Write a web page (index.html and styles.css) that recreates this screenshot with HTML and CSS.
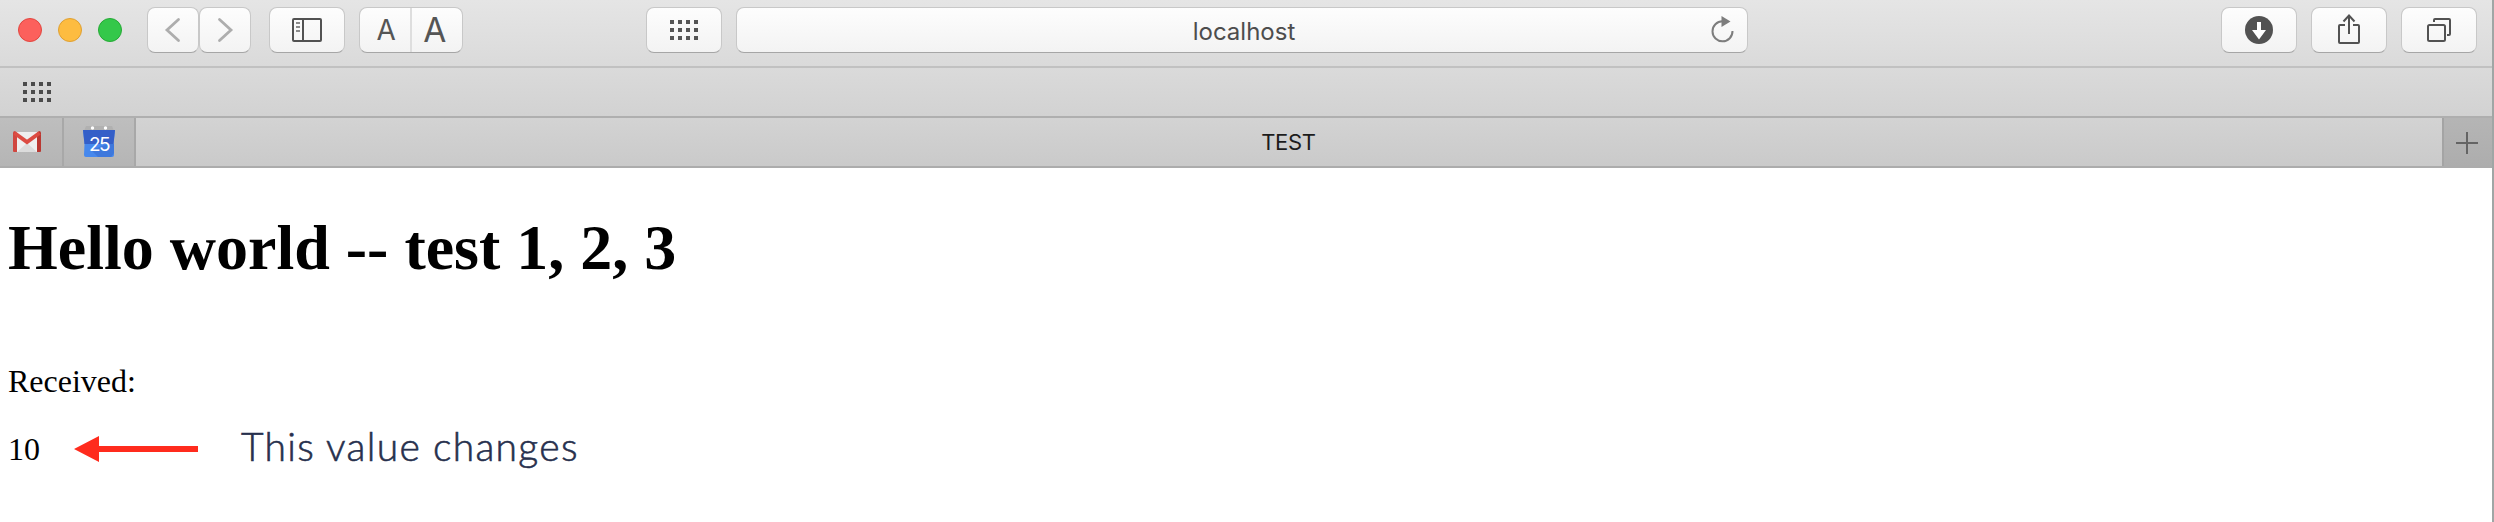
FILE: index.html
```html
<!DOCTYPE html>
<html lang="en">
<head>
<meta charset="utf-8">
<title>TEST</title>
<link rel="stylesheet" href="styles.css">
</head>
<body>
<div class="window">
  <header class="chrome">
    <div class="toolbar">
      <div class="lights"><i class="light red"></i><i class="light yellow"></i><i class="light green"></i></div>
      <div class="history">
        <button class="btn nav"><svg width="50" height="44"><path d="M30.500 11.500L19 22L30.500 32.500" fill="none" stroke="#adadad" stroke-width="2.800" stroke-linecap="round"/></svg></button>
        <button class="btn nav"><svg width="50" height="44"><path d="M19.500 11.500L31 22L19.500 32.500" fill="none" stroke="#adadad" stroke-width="2.800" stroke-linecap="round"/></svg></button>
      </div>
      <button class="btn side"><svg width="74" height="44"><g fill="none" stroke="#525252" stroke-width="2"><rect x="23" y="11" width="28" height="22" rx="1"/><path d="M33 11V33"/></g><path d="M26 15H30M26 19H30M26 23H30" stroke="#8b8b8b" stroke-width="2"/></svg></button>
      <div class="btn zoomer"><span class="small-a">A</span><span class="large-a">A</span></div>
      <button class="btn sites"><svg width="28" height="20"><path d="M0 2H28M0 10H28M0 18H28" stroke="#555" stroke-width="4" stroke-dasharray="4 4"/></svg></button>
      <div class="btn address"><span class="host">localhost</span>
        <svg class="reload" width="26" height="30"><path d="M12.500 5.300A10 10 0 1 0 22.500 15" fill="none" stroke="#7d7d7d" stroke-width="2"/><path d="M11.500 0L20.500 5.500L11.500 11Z" fill="#7d7d7d"/></svg>
      </div>
      <div class="actions">
        <button class="btn"><svg width="74" height="44"><circle cx="37" cy="22" r="14" fill="#525252"/><path d="M35 14H39V22H44L37 31.500L30 22H35Z" fill="#fff"/></svg></button>
        <button class="btn"><svg width="74" height="44"><g fill="none" stroke="#525252" stroke-width="2"><path d="M33 17H28Q27 17 27 18V34Q27 35 28 35H46Q47 35 47 34V18Q47 17 46 17H41"/><path d="M37 26V7.500M31.500 13.500L37 7.500L42.500 13.500"/></g></svg></button>
        <button class="btn"><svg width="74" height="44"><g fill="none" stroke="#525252" stroke-width="2"><rect x="26" y="17" width="17" height="16" rx="1.500"/><path d="M32 14V12Q32 11 33 11H47Q48 11 48 12V26Q48 27 47 27H45"/></g></svg></button>
      </div>
    </div>
    <div class="favorites"><svg width="28" height="20"><path d="M0 2H28M0 10H28M0 18H28" stroke="#4b4b4b" stroke-width="4" stroke-dasharray="4 4"/></svg></div>
    <div class="tabs">
      <div class="pin mail"><svg width="28" height="22"><path d="M2 1H26V21H2Z" fill="#efefef"/><path d="M4 21L14 12L24 21Z" fill="#dcdcdc"/><path d="M0 2Q0 0 2 0L4 2V21H1Q0 21 0 20Z" fill="#d04740"/><path d="M28 2Q28 0 26 0L24 2V21H27Q28 21 28 20Z" fill="#ba3832"/><path d="M1.500 2L14 11L26.500 2" fill="none" stroke="#dc4c43" stroke-width="4"/></svg></div>
      <div class="pin calendar"><svg width="32" height="32"><path d="M3 0H29L31 5H1Z" fill="#b1b1b1"/><path d="M0 4H32L30.500 18L31 29Q31 31 29 31H3Q1 31 1 29L1.500 18Z" fill="#4688ed"/><path d="M0 4H32L30.500 18H1.500Z" fill="#345fc8"/><path d="M8 24L15 31H28L31 27V18H25Z" fill="#3e78dc"/><circle cx="9.500" cy="2" r="1.700" fill="#fff"/><circle cx="22.500" cy="2" r="1.700" fill="#fff"/><text class="day" x="16" y="24.500" text-anchor="middle">25</text></svg></div>
      <div class="tab">TEST</div>
      <div class="add"><svg width="22" height="22"><path d="M11 0V22M0 11H22" stroke="#646464" stroke-width="2"/></svg></div>
    </div>
  </header>
  <main class="page">
    <h1>Hello world -- test 1, 2, 3</h1>
    <p class="label">Received:</p>
    <div class="result"><span class="value">10</span>
      <svg class="arrow" width="125" height="26"><path d="M0 13L25 0V10H124V16H25V26Z" fill="#ff2b1d"/></svg>
      <span class="note">This value changes</span></div>
  </main>
</div>
</body>
</html>
```
FILE: styles.css
```css
* { box-sizing: border-box; }
body { margin: 0; background: #fff; overflow: hidden; }
.window { height: 522px; border-right: 2px solid #a0a6a5; }
svg { display: block; flex: none; }
.toolbar, .favorites, .tabs { display: flex; align-items: center; }
.toolbar { height: 68px; padding: 0 15px 6px 18px; background: linear-gradient(#e5e5e5, #dadada); border-bottom: 2px solid #c1c1c1; }
.lights { display: flex; gap: 16px; width: 129px; }
.light { width: 24px; height: 24px; border-radius: 50%; border: 1px solid #e2463f; background: #fc605c; }
.yellow { background: #fdbc40; border-color: #dfa032; }
.green { background: #34c84a; border-color: #25aa35; }
.history { display: flex; margin-right: 18px; }
.btn { display: flex; align-items: center; justify-content: center; flex: none; width: 76px; height: 46px; margin: 0; padding: 0; border: 1px solid #c8c8c8; border-bottom-color: #a6a6a6; border-radius: 8px; background: linear-gradient(#fdfdfd, #f3f3f3); }
.nav { width: 52px; }
.side { margin-right: 14px; }
.zoomer { width: 104px; margin-right: 183px; font-family: Inter, sans-serif; color: #555; }
.zoomer span { flex: 1; height: 44px; line-height: 44px; text-align: center; }
.small-a { padding-left: 3px; font-size: 28px; border-right: 2px solid #dedede; }
.zoomer .large-a { padding-right: 4px; font-size: 33.5px; line-height: 44px; }
.sites { margin-right: 14px; }
.address { width: 1012px; position: relative; font: 24px/44px Inter, sans-serif; color: #4d4d4d; }
.host { padding: 3px 0 0 4px; }
.reload { position: absolute; right: 11px; top: 8px; }
.actions { display: flex; gap: 14px; margin-left: auto; }
.favorites { height: 50px; padding: 0 0 1px 23px; background: linear-gradient(#dadada, #d2d2d2); border-bottom: 2px solid #afafaf; }
.tabs { height: 50px; border-bottom: 2px solid #acacac; background: linear-gradient(#d3d3d3, #cacaca); align-items: stretch; }
.pin, .add { display: flex; align-items: center; background: linear-gradient(#bebebe, #b5b5b5); }
.mail { width: 64px; padding-left: 13px; border-right: 2px solid #a8a8a8; }
.calendar { width: 72px; padding-left: 19px; border-right: 2px solid #a8a8a8; }
.day { font: 19px Inter, sans-serif; letter-spacing: -1.6px; fill: #fff; }
.tab { flex: 1; padding-right: 1px; text-align: center; font: 22px/48px Inter, sans-serif; letter-spacing: -0.3px; color: #1c1c1c; }
.add { width: 50px; padding-right: 2px; padding-top: 1px; justify-content: center; border-left: 2px solid #a4a4a4; background: linear-gradient(#b5b5b5, #adadad); }
.page { padding: 43px 8px 0; font-family: "Liberation Serif", serif; color: #000; }
h1 { margin: 0; font-size: 64px; line-height: 74px; }
.label { margin: 78px 0 0; font-size: 32px; line-height: 36px; }
.result { display: flex; align-items: center; height: 36px; margin-top: 32px; font-size: 32px; line-height: 36px; }
.value { width: 66px; }
.arrow { margin-right: 42px; }
.note { padding-bottom: 6px; font: 300 39px/46px Lato, sans-serif; letter-spacing: 1.3px; color: #27304d; -webkit-text-stroke: 0.6px #27304d; white-space: nowrap; }
```
